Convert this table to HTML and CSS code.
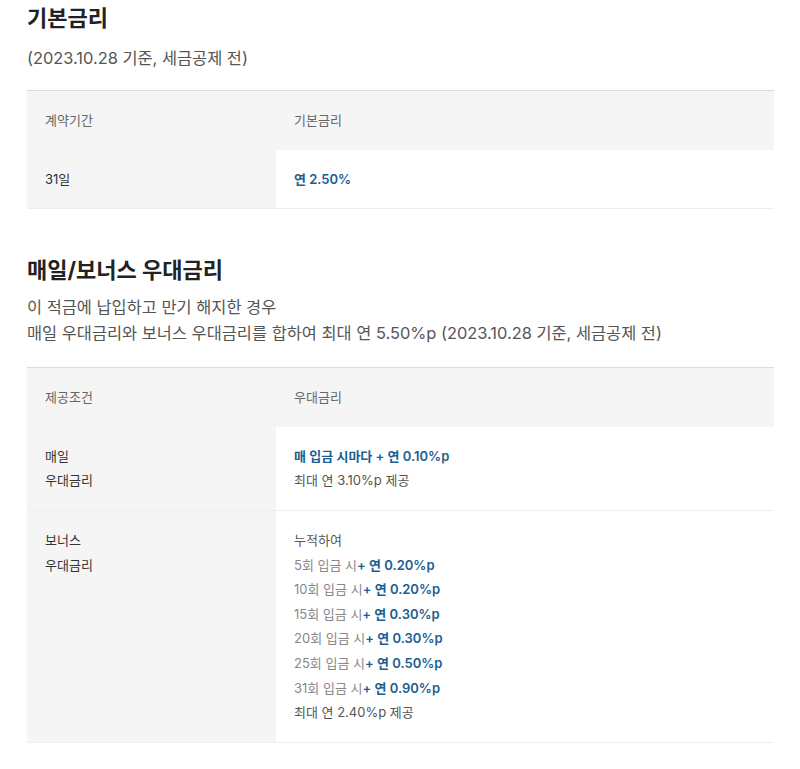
FILE: index.html
```html
<!DOCTYPE html>
<html lang="ko">
<head>
    <meta charset="UTF-8">
    <title>금리 안내</title>
    <link rel="stylesheet" href="styles.css">
</head>
<body>
    <div class="container">
        <section class="rate-section">
            <h2>기본금리</h2>
            <p class="note">(2023.10.28 기준, 세금공제 전)</p>
            <table class="rate-table">
                <thead>
                    <tr>
                        <th>계약기간</th>
                        <th>기본금리</th>
                    </tr>
                </thead>
                <tbody>
                    <tr>
                        <td>31일</td>
                        <td><strong class="rate">연 2.50%</strong></td>
                    </tr>
                </tbody>
            </table>
        </section>

        <section class="rate-section second">
            <h2>매일/보너스 우대금리</h2>
            <p class="note tight">이 적금에 납입하고 만기 해지한 경우<br>매일 우대금리와 보너스 우대금리를 합하여 최대 연 5.50%p (2023.10.28 기준, 세금공제 전)</p>
            <table class="rate-table">
                <thead>
                    <tr>
                        <th>제공조건</th>
                        <th>우대금리</th>
                    </tr>
                </thead>
                <tbody>
                    <tr>
                        <td>매일<br>우대금리</td>
                        <td>
                            <strong class="rate">매 입금 시마다 + 연 0.10%p</strong><br>
                            최대 연 3.10%p 제공
                        </td>
                    </tr>
                    <tr>
                        <td>보너스<br>우대금리</td>
                        <td>
                            누적하여<br>
                            <span class="step">5회 입금 시</span><strong class="rate">+ 연 0.20%p</strong><br>
                            <span class="step">10회 입금 시</span><strong class="rate">+ 연 0.20%p</strong><br>
                            <span class="step">15회 입금 시</span><strong class="rate">+ 연 0.30%p</strong><br>
                            <span class="step">20회 입금 시</span><strong class="rate">+ 연 0.30%p</strong><br>
                            <span class="step">25회 입금 시</span><strong class="rate">+ 연 0.50%p</strong><br>
                            <span class="step">31회 입금 시</span><strong class="rate">+ 연 0.90%p</strong><br>
                            최대 연 2.40%p 제공
                        </td>
                    </tr>
                </tbody>
            </table>
        </section>
    </div>
</body>
</html>
```

FILE: styles.css
```css
body {
    font-family: Inter, "Noto Sans CJK KR", sans-serif;
    color: #333;
    background-color: #fff;
    margin: 0;
}
.container {
    padding: 0 26px 0 27px;
}
h2 {
    font-size: 22px;
    line-height: 36px;
    font-weight: bold;
    color: #222;
    margin: 0;
}
.second {
    margin-top: 43px;
}
.note {
    font-size: 16.4px;
    line-height: 26px;
    color: #555;
    margin: 9px 0 0;
}
.note.tight {
    margin-top: 6px;
}
.rate-table {
    width: 100%;
    border-collapse: collapse;
    margin-top: 19px;
    border-top: 1px solid #dcdcdc;
    font-size: 13px;
    line-height: 24.6px;
}
.second .rate-table {
    margin-top: 21px;
}
th, td {
    text-align: left;
    vertical-align: top;
    padding: 17px 18px;
}
th {
    font-weight: normal;
    color: #666;
    background-color: #f5f5f5;
}
th:first-child, td:first-child {
    width: 213px;
}
td {
    color: #555;
    border-bottom: 1px solid #eee;
}
td:first-child {
    background-color: #f5f5f5;
    color: #333;
}
.rate {
    color: #1b5e91;
    font-weight: 600;
}
.step {
    color: #888;
}
```
